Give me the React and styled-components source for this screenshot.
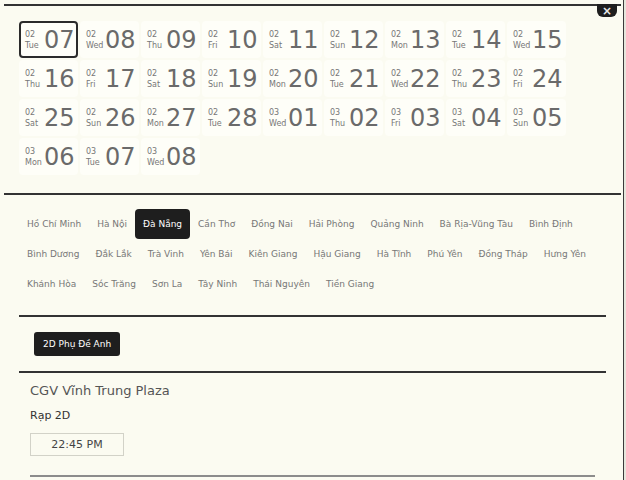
import React from "react";
import styled, { createGlobalStyle } from "styled-components";

const GlobalStyle = createGlobalStyle`
  html, body {
    margin: 0;
    padding: 0;
    background-color: #e6e6dc;
    font-family: "DejaVu Sans", Verdana, sans-serif;
  }
`;

const Modal = styled.div`
  position: relative;
  width: 619px;
  min-height: 480px;
  padding: 4px 2px 0 2px;
  background-color: #fbfbf1;
  border-right: 1px solid #3a3a3a;
`;

const CloseButton = styled.button`
  position: absolute;
  top: 4px;
  right: 6px;
  width: 20px;
  height: 13px;
  padding: 0;
  border: none;
  border-radius: 0 0 6px 6px;
  background-color: #1e1e1e;
  color: #e8e8e8;
  font-size: 12px;
  font-weight: bold;
  line-height: 12px;
  font-family: "DejaVu Sans", sans-serif;
`;

const DateSection = styled.div`
  margin-left: 2px;
  padding: 15px 0 18px 15px;
  border-top: 2px solid #333;
  border-bottom: 2px solid #333;
`;

const DateGrid = styled.div`
  display: flex;
  flex-wrap: wrap;
  gap: 2px;
  width: 587px;
`;

const DateCell = styled.div`
  box-sizing: border-box;
  width: 59px;
  height: 37px;
  display: flex;
  align-items: center;
  padding-left: ${(p) => (p.$active ? "4px" : "6px")};
  background-color: #fefef8;
  border: ${(p) => (p.$active ? "2px solid #2b2b2b" : "none")};
  border-radius: 4px;
  color: #666;
`;

const SmallCol = styled.div`
  width: 18px;
  display: flex;
  flex-direction: column;
  font-size: 8px;
  line-height: 11px;
  color: #777;
`;

const DayNumber = styled.span`
  margin-left: 1px;
  font-size: 24px;
  line-height: 28px;
  color: #6a6a6a;
`;

const Inner = styled.div`
  margin: 0 15px 0 17px;
`;

const CityList = styled.div`
  display: flex;
  flex-wrap: wrap;
  padding: 14px 0 16px 0;
  border-bottom: 2px solid #333;
`;

const City = styled.span`
  height: 30px;
  line-height: 30px;
  padding: 0 8px;
  font-size: 9px;
  border-radius: 4px;
  color: ${(p) => (p.$active ? "#fff" : "#777")};
  background-color: ${(p) => (p.$active ? "#1e1e1e" : "transparent")};
`;

const FormatBar = styled.div`
  padding: 15px;
  border-bottom: 2px solid #333;
`;

const FormatButton = styled.button`
  height: 24px;
  padding: 0 9px;
  border: none;
  border-radius: 3px;
  background-color: #1e1e1e;
  color: #fff;
  font-family: "DejaVu Sans", sans-serif;
  font-size: 9px;
`;

const Cinema = styled.div`
  padding: 0 11px;
`;

const CinemaName = styled.div`
  margin-top: 9px;
  font-size: 13px;
  line-height: 18px;
  color: #555;
`;

const Room = styled.div`
  margin-top: 9px;
  font-size: 11px;
  line-height: 14px;
  color: #333;
`;

const TimeBox = styled.div`
  box-sizing: border-box;
  margin-top: 10px;
  width: 94px;
  height: 23px;
  display: flex;
  align-items: center;
  justify-content: center;
  border: 1px solid #d2d2c8;
  font-size: 11px;
  color: #444;
`;

const BottomLine = styled.div`
  margin: 19px 0 0 0;
  width: 565px;
  border-top: 2px solid #8c8c8c;
`;

const WEEKDAYS = ["Sun", "Mon", "Tue", "Wed", "Thu", "Fri", "Sat"];

const dates = Array.from({ length: 30 }, (_, i) => {
  const d = new Date(2023, 1, 7 + i);
  return {
    month: String(d.getMonth() + 1).padStart(2, "0"),
    weekday: WEEKDAYS[d.getDay()],
    day: String(d.getDate()).padStart(2, "0"),
  };
});

const cities = [
  "Hồ Chí Minh", "Hà Nội", "Đà Nẵng", "Cần Thơ", "Đồng Nai", "Hải Phòng",
  "Quảng Ninh", "Bà Rịa-Vũng Tàu", "Bình Định", "Bình Dương", "Đắk Lắk",
  "Trà Vinh", "Yên Bái", "Kiên Giang", "Hậu Giang", "Hà Tĩnh", "Phú Yên",
  "Đồng Tháp", "Hưng Yên", "Khánh Hòa", "Sóc Trăng", "Sơn La", "Tây Ninh",
  "Thái Nguyên", "Tiền Giang",
];

const App = () => {
  return (
    <>
      <GlobalStyle />
      <Modal>
        <CloseButton>×</CloseButton>
        <DateSection>
          <DateGrid>
            {dates.map((d, i) => (
              <DateCell key={i} $active={i === 0}>
                <SmallCol>
                  <span>{d.month}</span>
                  <span>{d.weekday}</span>
                </SmallCol>
                <DayNumber>{d.day}</DayNumber>
              </DateCell>
            ))}
          </DateGrid>
        </DateSection>
        <Inner>
          <CityList>
            {cities.map((c) => (
              <City key={c} $active={c === "Đà Nẵng"}>
                {c}
              </City>
            ))}
          </CityList>
          <FormatBar>
            <FormatButton>2D Phụ Đề Anh</FormatButton>
          </FormatBar>
          <Cinema>
            <CinemaName>CGV Vĩnh Trung Plaza</CinemaName>
            <Room>Rạp 2D</Room>
            <TimeBox>22:45 PM</TimeBox>
            <BottomLine />
          </Cinema>
        </Inner>
      </Modal>
    </>
  );
};

export default App;
